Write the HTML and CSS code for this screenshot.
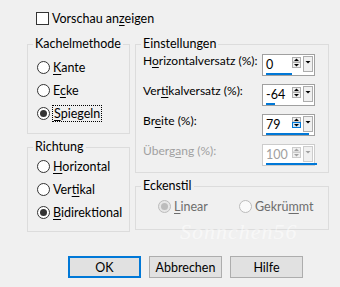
FILE: index.html
```html
<!DOCTYPE html>
<html lang="de">
<head>
    <meta charset="UTF-8">
    <title>Nahtloses Kacheln</title>
    <link rel="stylesheet" href="styles.css">
</head>
<body>
    <div class="dialog">
        <div class="check"><span class="box"></span><span>Vorschau an<u>z</u>eigen</span></div>

        <div class="columns">
            <div class="col">
                <fieldset class="group kachel">
                    <legend>Kachelmethode</legend>
                    <div class="radio"><span class="dot"></span><span><u>K</u>ante</span></div>
                    <div class="radio"><span class="dot"></span><span>E<u>c</u>ke</span></div>
                    <div class="radio on"><span class="dot"></span><span class="focus"><u>S</u>piegeln</span></div>
                </fieldset>
                <fieldset class="group richtung">
                    <legend>Richtung</legend>
                    <div class="radio"><span class="dot"></span><span><u>H</u>orizontal</span></div>
                    <div class="radio"><span class="dot"></span><span>Ver<u>t</u>ikal</span></div>
                    <div class="radio on"><span class="dot"></span><span><u>B</u>idirektional</span></div>
                </fieldset>
            </div>

            <div class="col">
                <fieldset class="group einst">
                    <legend>Einstellungen</legend>
                    <div class="rows">
                        <div class="row">
                            <span class="lbl">H<u>o</u>rizontalversatz (%):</span>
                            <div class="spin">
                                <div class="spin-top">
                                    <span class="val">0</span>
                                    <svg class="arrows" width="9" height="11" viewBox="0 0 9 11"><rect x="0.5" y="0.5" width="8" height="4.5" fill="#f0f0f0" stroke="#adadad"/><path d="M4.5 1.5L7 4H2z" fill="#000"/><rect x="0.5" y="5.5" width="8" height="5" fill="#f0f0f0" stroke="#adadad"/><path d="M2 7H7L4.5 9.5z" fill="#000"/></svg>
                                    <svg class="drop" width="10" height="16" viewBox="0 0 10 16"><rect x="0.5" y="0.5" width="9" height="15" fill="#f0f0f0" stroke="#adadad"/><path d="M2.5 5H7.5L5 7.5z" fill="#000"/></svg>
                                </div>
                                <span class="bar" style="width:26px"></span>
                            </div>
                        </div>
                        <div class="row">
                            <span class="lbl">Ver<u>t</u>ikalversatz (%):</span>
                            <div class="spin">
                                <div class="spin-top">
                                    <span class="val">-64</span>
                                    <svg class="arrows" width="9" height="11" viewBox="0 0 9 11"><rect x="0.5" y="0.5" width="8" height="4.5" fill="#f0f0f0" stroke="#adadad"/><path d="M4.5 1.5L7 4H2z" fill="#000"/><rect x="0.5" y="5.5" width="8" height="5" fill="#f0f0f0" stroke="#adadad"/><path d="M2 7H7L4.5 9.5z" fill="#000"/></svg>
                                    <svg class="drop" width="10" height="16" viewBox="0 0 10 16"><rect x="0.5" y="0.5" width="9" height="15" fill="#f0f0f0" stroke="#adadad"/><path d="M2.5 5H7.5L5 7.5z" fill="#000"/></svg>
                                </div>
                                <span class="bar" style="width:9px"></span>
                            </div>
                        </div>
                        <div class="row">
                            <span class="lbl">Br<u>e</u>ite (%):</span>
                            <div class="spin">
                                <div class="spin-top">
                                    <span class="val">79</span>
                                    <svg class="arrows" width="9" height="11" viewBox="0 0 9 11"><rect x="0.5" y="0.5" width="8" height="4.5" fill="#f0f0f0" stroke="#adadad"/><path d="M4.5 1.5L7 4H2z" fill="#000"/><rect x="0.5" y="5.5" width="8" height="5" fill="#cce4f7" stroke="#0078d7"/><path d="M2 7H7L4.5 9.5z" fill="#000"/></svg>
                                    <svg class="drop" width="10" height="16" viewBox="0 0 10 16"><rect x="0.5" y="0.5" width="9" height="15" fill="#f0f0f0" stroke="#adadad"/><path d="M2.5 5H7.5L5 7.5z" fill="#000"/></svg>
                                </div>
                                <span class="bar" style="width:43px"></span>
                            </div>
                        </div>
                        <div class="row off">
                            <span class="lbl">Überg<u>a</u>ng (%):</span>
                            <div class="spin">
                                <div class="spin-top">
                                    <span class="val">100</span>
                                    <svg class="arrows" width="9" height="11" viewBox="0 0 9 11"><rect x="0.5" y="0.5" width="8" height="4.5" fill="#f0f0f0" stroke="#cccccc"/><path d="M4.5 1.5L7 4H2z" fill="#a0a0a0"/><rect x="0.5" y="5.5" width="8" height="5" fill="#f0f0f0" stroke="#cccccc"/><path d="M2 7H7L4.5 9.5z" fill="#a0a0a0"/></svg>
                                    <svg class="drop" width="10" height="16" viewBox="0 0 10 16"><rect x="0.5" y="0.5" width="9" height="15" fill="#f0f0f0" stroke="#cccccc"/><path d="M2.5 5H7.5L5 7.5z" fill="#a0a0a0"/></svg>
                                </div>
                                <span class="bar" style="width:51px"></span>
                            </div>
                        </div>
                    </div>
                </fieldset>
                <fieldset class="group ecken">
                    <legend>Eckenstil</legend>
                    <div class="radios">
                        <div class="radio off on"><span class="dot"></span><span><u>L</u>inear</span></div>
                        <div class="radio off"><span class="dot"></span><span>Gekrü<u>m</u>mt</span></div>
                    </div>
                </fieldset>
            </div>
        </div>

        <div class="buttons">
            <button class="btn default">OK</button>
            <button class="btn">Abbrechen</button>
            <button class="btn">Hilfe</button>
        </div>

        <span class="watermark">Sonnchen56</span>
    </div>
</body>
</html>
```

FILE: styles.css
```css
body {
    margin: 0;
    background-color: #f0f0f0;
    font-family: 'Lato', sans-serif;
    font-size: 12.5px;
    color: #000;
}

.dialog {
    position: relative;
    width: 340px;
    height: 287px;
    overflow: hidden;
}

u {
    text-decoration-thickness: 1px;
    text-underline-offset: 2px;
}

.check {
    display: flex;
    align-items: center;
    gap: 3px;
    padding: 12px 0 0 36px;
    height: 13px;
    line-height: 13px;
}

.check .box {
    width: 11px;
    height: 11px;
    border: 1px solid #333;
    background-color: #fff;
}

.columns {
    display: flex;
    gap: 5px;
    margin-top: 11px;
    padding-left: 27px;
}

.col {
    display: flex;
    flex-direction: column;
    gap: 5px;
}

.group {
    margin: 0;
    padding: 0;
    border: 1px solid #dcdcdc;
    box-sizing: border-box;
    min-width: 0;
}

.group legend {
    margin-left: 5px;
    padding: 0 2px;
    line-height: 16px;
}

.kachel {
    width: 103px;
    height: 98px;
    padding-top: 4px;
}

.richtung {
    width: 103px;
    height: 93px;
}

.einst {
    width: 194px;
    height: 137px;
}

.rows {
    display: flex;
    flex-direction: column;
    gap: 8px;
    padding: 2px 0 0 7px;
}

.ecken {
    width: 194px;
    height: 52px;
}

.radio {
    display: flex;
    align-items: center;
    gap: 3px;
    height: 23px;
    padding-left: 9px;
}

.radios {
    display: flex;
    padding: 1px 0 0 22px;
}

.radios .radio {
    padding-left: 0;
    width: 81px;
}

.dot {
    width: 11px;
    height: 11px;
    border: 1px solid #333;
    border-radius: 50%;
    background-color: #fff;
    display: flex;
    align-items: center;
    justify-content: center;
}

.radio.on .dot::after {
    content: "";
    width: 7px;
    height: 7px;
    border-radius: 50%;
    background-color: #333;
}

.radio.off {
    color: #6d6d6d;
}

.radio.off .dot {
    border-color: #bcbcbc;
    background-color: #fafafa;
}

.radio.off.on .dot {
    background-color: #e6e6e6;
}

.radio.off.on .dot::after {
    background-color: #bcbcbc;
}

.focus {
    outline: 1px dotted #000;
    outline-offset: 0;
    padding: 0 1px;
}

.row {
    display: flex;
    justify-content: space-between;
    align-items: flex-start;
    width: 172px;
    height: 22px;
}

.lbl {
    font-size: 12px;
    line-height: 16px;
    margin-top: -1px;
    white-space: nowrap;
}

.row.off .lbl {
    color: #a0a0a0;
}

.spin {
    flex-shrink: 0;
    width: 53px;
    height: 22px;
    box-sizing: border-box;
    border: 1px solid #a0a0a0;
    background-color: #fff;
    display: flex;
    flex-direction: column;
    padding: 1px 1px 0 3px;
}

.row.off .spin {
    border-color: #cccccc;
}

.spin-top {
    display: flex;
    align-items: flex-start;
    height: 17px;
}

.val {
    flex: 1;
    line-height: 17px;
}

.row.off .val {
    color: #a0a0a0;
}

.arrows {
    margin: 1px 2px 0 0;
}

.bar {
    display: block;
    height: 2px;
    background-color: #0078d7;
}

.buttons {
    display: flex;
    gap: 8px;
    margin-top: 24px;
    padding-left: 68px;
}

.btn {
    width: 73px;
    height: 22px;
    box-sizing: border-box;
    border: 1px solid #adadad;
    background-color: #e1e1e1;
    font-family: 'Lato', sans-serif;
    font-size: 12.5px;
    color: #000;
    padding: 0;
}

.btn.default {
    border: 2px solid #0078d7;
}

.watermark {
    position: absolute;
    left: 180px;
    top: 219px;
    font-family: 'Liberation Serif', serif;
    font-style: italic;
    font-size: 22px;
    letter-spacing: 1px;
    color: rgba(255, 255, 255, 0.55);
}
```
